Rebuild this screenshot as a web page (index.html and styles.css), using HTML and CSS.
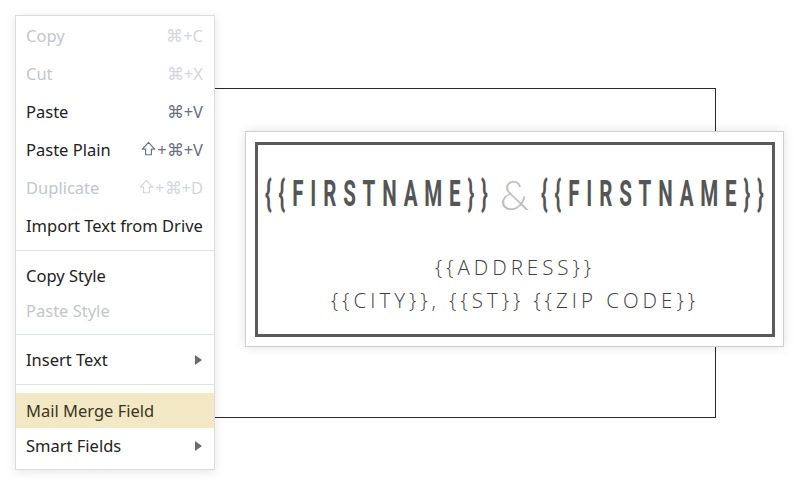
FILE: index.html
```html
<!DOCTYPE html>
<html>
<head>
<meta charset="utf-8">
<link rel="stylesheet" href="styles.css">
</head>
<body>
<div class="stage">
  <div class="page-outline"></div>
  <div class="card">
    <div class="frame">
      <div class="names">
        <span class="fn"><span class="fn-text">{{FIRSTNAME}}</span></span>
        <span class="amp">&amp;</span>
        <span class="fn"><span class="fn-text">{{FIRSTNAME}}</span></span>
      </div>
      <div class="address">
        <div>{{ADDRESS}}</div>
        <div>{{CITY}}, {{ST}} {{ZIP CODE}}</div>
      </div>
    </div>
  </div>
  <div class="menu">
    <div class="group g1">
      <div class="item disabled"><span>Copy</span><span class="key">⌘+C</span></div>
      <div class="item disabled"><span>Cut</span><span class="key">⌘+X</span></div>
      <div class="item"><span>Paste</span><span class="key">⌘+V</span></div>
      <div class="item"><span>Paste Plain</span><span class="key"><svg class="shift" viewBox="0 0 14 14" width="15" height="15"><path d="M7 1.2 L12.8 7.6 H9.7 V12.8 H4.3 V7.6 H1.2 Z" fill="none" stroke="currentColor" stroke-width="1.1" stroke-linejoin="round"/></svg>+⌘+V</span></div>
      <div class="item disabled"><span>Duplicate</span><span class="key"><svg class="shift" viewBox="0 0 14 14" width="15" height="15"><path d="M7 1.2 L12.8 7.6 H9.7 V12.8 H4.3 V7.6 H1.2 Z" fill="none" stroke="currentColor" stroke-width="1.1" stroke-linejoin="round"/></svg>+⌘+D</span></div>
      <div class="item"><span>Import Text from Drive</span></div>
    </div>
    <div class="sep"></div>
    <div class="group">
      <div class="item"><span>Copy Style</span></div>
      <div class="item disabled"><span>Paste Style</span></div>
    </div>
    <div class="sep"></div>
    <div class="group">
      <div class="item"><span>Insert Text</span><span class="arrow"></span></div>
    </div>
    <div class="sep sep-last"></div>
    <div class="group">
      <div class="item active"><span>Mail Merge Field</span></div>
      <div class="item"><span>Smart Fields</span><span class="arrow"></span></div>
    </div>
  </div>
</div>
</body>
</html>
```
FILE: styles.css
```css
html, body {
  margin: 0;
  padding: 0;
  background: #ffffff;
}
body {
  width: 800px;
  height: 484px;
  overflow: hidden;
  font-family: "Noto Sans", "Lato", sans-serif;
}
.stage {
  position: relative;
  width: 800px;
  height: 484px;
}
.page-outline {
  position: absolute;
  left: 100px;
  top: 88px;
  width: 614px;
  height: 328px;
  border: 1px solid #2a2a2a;
}
.card {
  position: absolute;
  left: 245px;
  top: 131px;
  width: 539px;
  height: 216px;
  background: #fff;
  border: 1px solid #cfcfcf;
  box-shadow: 0 0 10px rgba(0,0,0,0.12);
  padding: 10px 8px 9px 9px;
  box-sizing: border-box;
  display: flex;
}
.frame {
  flex: 1;
  border: 3px solid #5a5a5a;
  display: flex;
  flex-direction: column;
  align-items: center;
}
.names {
  display: flex;
  align-items: center;
  margin-top: 24px;
  height: 50px;
  color: #555;
}
.fn {
  display: block;
  width: 224px;
  height: 50px;
  overflow: visible;
  white-space: nowrap;
}
.fn-text {
  display: inline-block;
  width: 402px;
  margin-right: -178px;
  font-family: "Roboto", "Liberation Sans", sans-serif;
  font-weight: 700;
  font-size: 36px;
  line-height: 50px;
  letter-spacing: 12px;
  transform: scaleX(0.57);
  transform-origin: left center;
}
.amp {
  font-family: "Lato", sans-serif;
  font-weight: 300;
  font-size: 42px;
  color: #bdbdbd;
  margin: 0 12px 0 11px;
  line-height: 50px;
}
.address {
  margin-top: 32px;
  text-align: center;
  font-family: "Open Sans", "Lato", sans-serif;
  font-weight: 300;
  font-size: 20.5px;
  letter-spacing: 4px;
  line-height: 33px;
  color: #404040;
}
.menu {
  position: absolute;
  left: 15px;
  top: 15px;
  width: 200px;
  background: #fff;
  border: 1px solid #dcdcdc;
  box-shadow: 0 2px 10px rgba(0,0,0,0.10);
  padding: 0 0 6px 0;
  box-sizing: border-box;
}
.item {
  height: 35px;
  display: flex;
  align-items: center;
  justify-content: space-between;
  padding: 0 11px 0 10px;
  font-size: 16.5px;
  color: #222;
}
.g1 .item {
  height: 38px;
}
.item.disabled {
  color: #c2c6cb;
}
.key {
  display: flex;
  align-items: center;
  color: #6a707c;
  font-size: 16.5px;
}
.shift {
  margin-right: 1px;
  margin-top: -1px;
}
.item.disabled .key {
  color: #d3d6da;
}
.item.active {
  background: #f2e9c4;
  color: #3a3526;
}
.arrow {
  width: 0;
  height: 0;
  border-top: 5px solid transparent;
  border-bottom: 5px solid transparent;
  border-left: 7px solid #666c76;
  margin-right: 1px;
}
.sep {
  height: 1px;
  background: #dde2e8;
  margin: 6px 0 7px 0;
}
.sep.sep-last {
  margin: 7px 0 8px 0;
}
```
